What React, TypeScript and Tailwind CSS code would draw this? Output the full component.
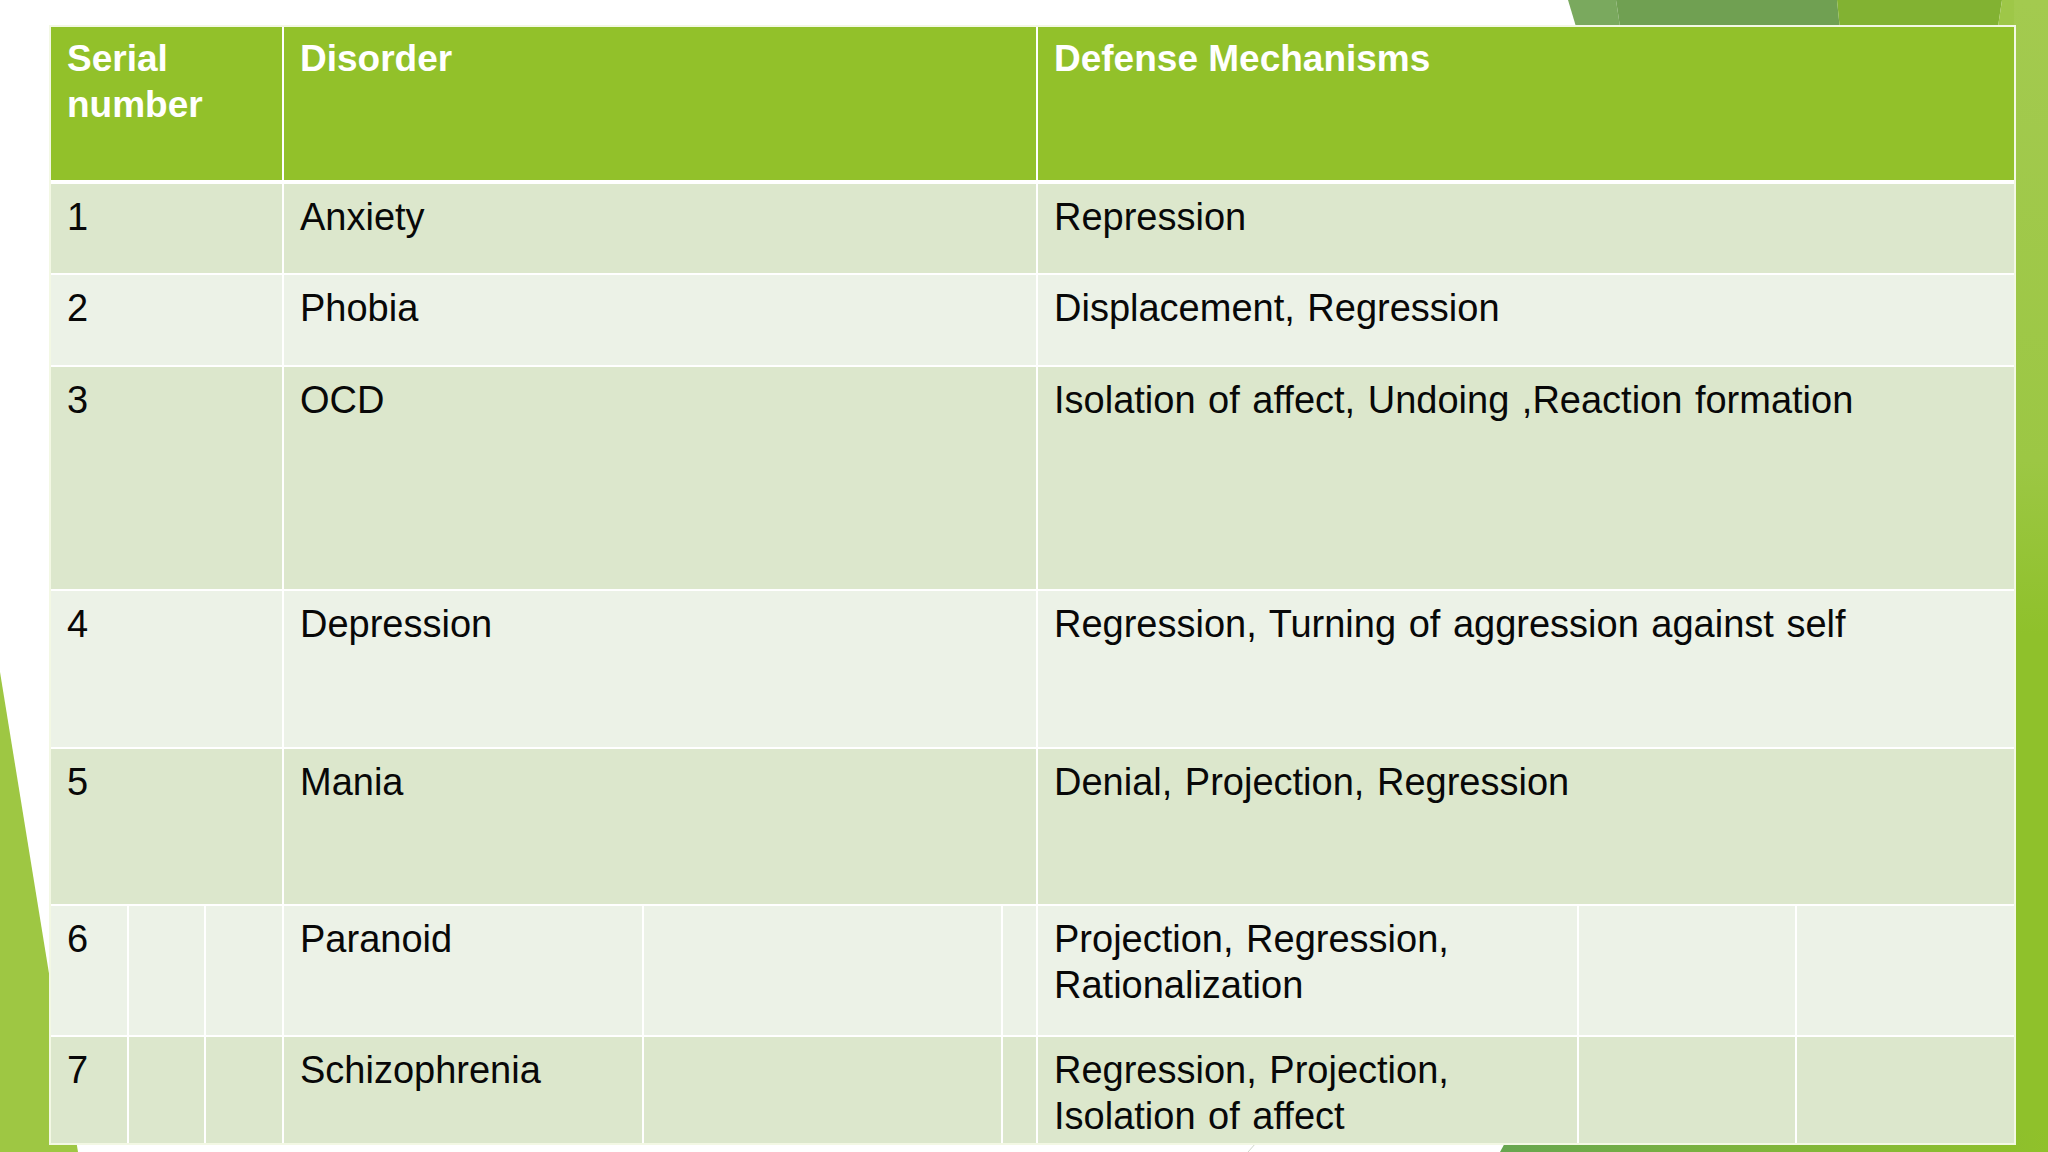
import React from 'react';

type Row = {
    no: string;
    disorder: string;
    mechanisms: string;
    split?: boolean;
};

const rows: Row[] = [
    { no: '1', disorder: 'Anxiety', mechanisms: 'Repression' },
    { no: '2', disorder: 'Phobia', mechanisms: 'Displacement, Regression' },
    { no: '3', disorder: 'OCD', mechanisms: 'Isolation of affect, Undoing ,Reaction formation' },
    { no: '4', disorder: 'Depression', mechanisms: 'Regression, Turning of aggression against self' },
    { no: '5', disorder: 'Mania', mechanisms: 'Denial, Projection, Regression' },
    { no: '6', disorder: 'Paranoid', mechanisms: 'Projection, Regression, Rationalization', split: true },
    { no: '7', disorder: 'Schizophrenia', mechanisms: 'Regression, Projection, Isolation of affect', split: true },
];

// slide background shapes (facet theme)
const SlideArt = () => (
    <svg
        className="absolute inset-0 w-full h-full"
        viewBox="0 0 2048 1152"
        preserveAspectRatio="none"
    >
        <defs>
            <linearGradient id="strip" x1="0" y1="0" x2="0" y2="1">
                <stop offset="0" stopColor="#a3ca4f" />
                <stop offset="0.4" stopColor="#9cc744" />
                <stop offset="0.55" stopColor="#8fc12b" />
                <stop offset="1" stopColor="#8fc12b" />
            </linearGradient>
            <linearGradient id="bottom" x1="0" y1="0" x2="1" y2="0">
                <stop offset="0" stopColor="#67a64f" />
                <stop offset="0.5" stopColor="#80b53a" />
                <stop offset="1" stopColor="#90c12a" />
            </linearGradient>
        </defs>
        <polygon points="1568,0 1616,0 1622,40 1580,40" fill="#7aa95e" />
        <polygon points="1616,0 1837,0 1841,40 1622,40" fill="#70a052" />
        <polygon points="1837,0 2002,0 1996,40 1841,40" fill="#82b232" />
        <polygon points="2002,0 2048,0 2048,40 1996,40" fill="#9ec748" />
        <rect x="2014" y="0" width="34" height="1152" fill="url(#strip)" />
        <polygon points="1512,1130 2048,1130 2048,1152 1500,1152" fill="url(#bottom)" />
        <polygon points="0,672 78,1152 0,1152" fill="#9ec743" />
        <line x1="1256" y1="1143" x2="1248" y2="1152" stroke="#cfd6c8" strokeWidth="1" />
    </svg>
);

const Cell = ({
    children,
    span,
    odd,
}: {
    children?: React.ReactNode;
    span?: boolean;
    odd: boolean;
}) => (
    <div
        className={`${span ? 'col-span-3' : ''} ${odd ? 'bg-[#dce7cc]' : 'bg-[#ecf2e7]'} pl-4 pr-3 pt-[10px] text-[38px] leading-[46px] [word-spacing:2px] text-[#080808]`}
    >
        {children}
    </div>
);

export default function App() {
    return (
        <div className="relative w-[2048px] h-[1152px] overflow-hidden bg-white font-['Liberation_Sans',Arial,sans-serif]">
            <SlideArt />
            <div className="relative pl-[51px] pt-[27px]">
                <div className="grid w-[1963px] grid-cols-[76px_75px_76px_358px_357px_33px_539px_216px_217px] grid-rows-[155px_89px_90px_222px_156px_155px_129px_106px] gap-[2px] bg-white ring-2 ring-[#f3f8e4]">
                    <div className="col-span-3 bg-[#92c12a] border-b-2 border-white pl-4 pr-3 pt-[9px] text-[37px] leading-[46px] font-bold text-white">
                        Serial number
                    </div>
                    <div className="col-span-3 bg-[#92c12a] border-b-2 border-white pl-4 pt-[9px] text-[37px] leading-[46px] font-bold text-white">
                        Disorder
                    </div>
                    <div className="col-span-3 bg-[#92c12a] border-b-2 border-white pl-4 pt-[9px] text-[37px] leading-[46px] font-bold text-white">
                        Defense Mechanisms
                    </div>

                    {rows.map((row, i) => {
                        const odd = i % 2 === 0;
                        if (row.split) {
                            return (
                                <React.Fragment key={row.no}>
                                    <Cell odd={odd}>{row.no}</Cell>
                                    <Cell odd={odd} />
                                    <Cell odd={odd} />
                                    <Cell odd={odd}>{row.disorder}</Cell>
                                    <Cell odd={odd} />
                                    <Cell odd={odd} />
                                    <Cell odd={odd}>{row.mechanisms}</Cell>
                                    <Cell odd={odd} />
                                    <Cell odd={odd} />
                                </React.Fragment>
                            );
                        }
                        return (
                            <React.Fragment key={row.no}>
                                <Cell span odd={odd}>{row.no}</Cell>
                                <Cell span odd={odd}>{row.disorder}</Cell>
                                <Cell span odd={odd}>{row.mechanisms}</Cell>
                            </React.Fragment>
                        );
                    })}
                </div>
            </div>
        </div>
    );
}
